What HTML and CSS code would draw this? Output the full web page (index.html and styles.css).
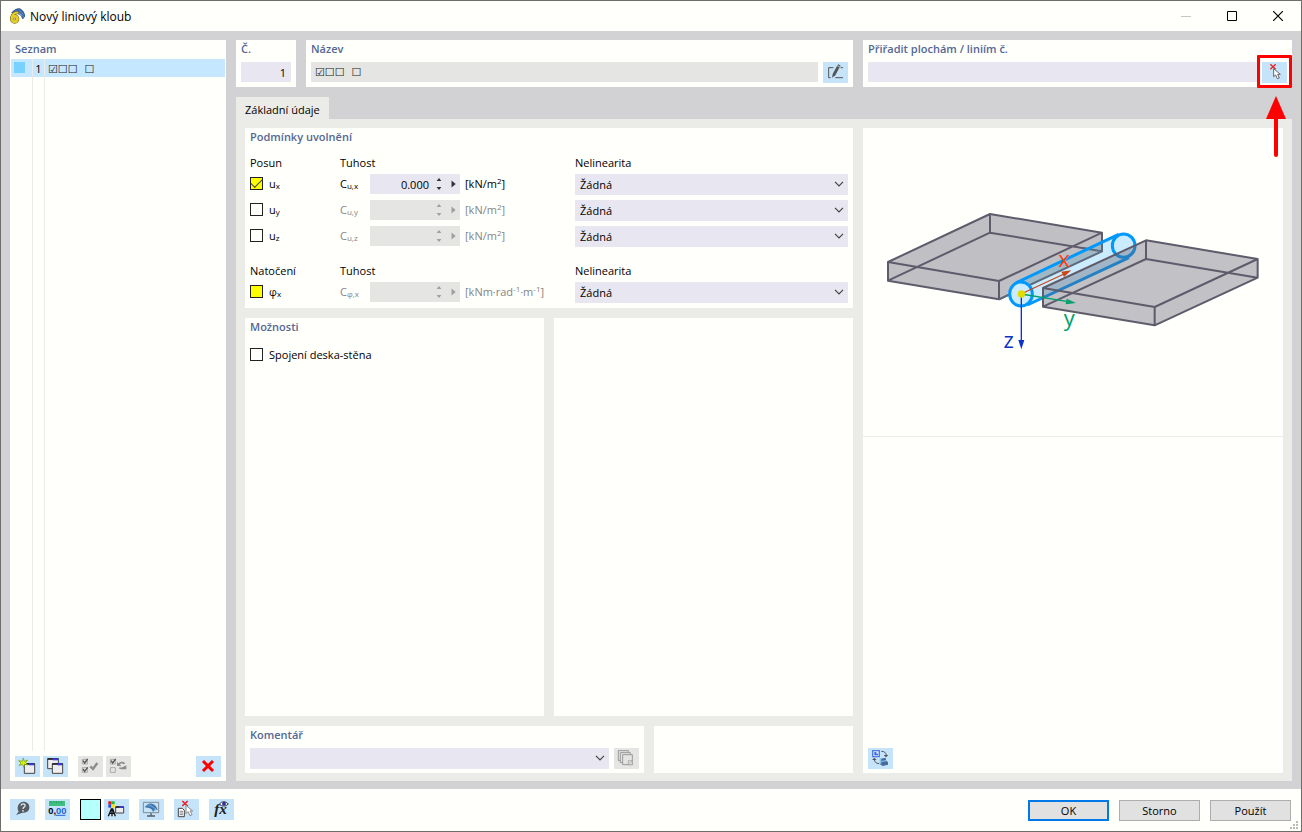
FILE: index.html
```html
<!DOCTYPE html>
<html lang="cs">
<head>
<meta charset="utf-8">
<title>Nový liniový kloub</title>
<link rel="stylesheet" href="styles.css">
</head>
<body>
<svg class="defs" aria-hidden="true">
  <symbol id="chevron" viewBox="0 0 10 6"><path d="M1 .8L5 4.8L9 .8" fill="none" stroke="#444" stroke-width="1.2"/></symbol>
  <symbol id="updown" viewBox="0 0 6 12"><path d="M3 0L5.4 3H.6zM3 12L5.4 9H.6z" fill="currentColor"/></symbol>
  <symbol id="play" viewBox="0 0 5 8"><path d="M.5 .5L4.7 4L.5 7.500z" fill="currentColor"/></symbol>
</svg>
<div class="window">
  <header class="titlebar">
    <svg class="app-icon" viewBox="0 0 48 48">
      <path d="M8 14Q20 0 33 2Q45 8 48 24L41 33Q39 20 25 16z" fill="#3566a8" stroke="#1f4475" stroke-width="2"/>
      <path d="M20 7L40 24M29 4L44 20M16 12Q30 8 44 27" stroke="#8fb6e0" stroke-width="1.500" fill="none"/>
      <path d="M25 14Q12 13 8 28" fill="none" stroke="#6d5d14" stroke-width="9" stroke-linecap="round"/>
      <circle cx="17" cy="33" r="8" fill="none" stroke="#6d5d14" stroke-width="12"/>
      <circle cx="17" cy="33" r="8" fill="none" stroke="#e3cb28" stroke-width="9"/>
      <path d="M25 14Q12 13 8 28" fill="none" stroke="#e3cb28" stroke-width="6" stroke-linecap="round"/>
    </svg>
    <h1>Nový liniový kloub</h1>
    <div class="window-controls">
      <button aria-label="Minimalizovat" disabled><svg viewBox="0 0 10 10"><path d="M0 5.500H10" stroke="#c4c8c2"/></svg></button>
      <button aria-label="Maximalizovat"><svg viewBox="0 0 10 10"><path d="M.5 .5H9.500V9.500H.5z" fill="none" stroke="#000"/></svg></button>
      <button aria-label="Zavřít"><svg viewBox="0 0 10 10"><path d="M0 0L10 10M10 0L0 10" stroke="#000" stroke-width="1.200"/></svg></button>
    </div>
  </header>

  <div class="workspace">
    <aside class="panel list-panel">
      <h2>Seznam</h2>
      <div class="list">
        <div class="selected"><span class="color-chip"></span></div>
        <div class="selected number">1</div>
        <div class="selected symbols">☑☐☐&nbsp; ☐</div>
        <div></div><div></div><div class="last"></div>
      </div>
      <div class="list-tools">
        <button class="tool" aria-label="Nový"><svg viewBox="0 0 75 63">
          <path d="M28 23H59V52H28z" fill="#eee" stroke="#444" stroke-width="3"/><path d="M28 24H59" stroke="#222" stroke-width="5"/><path d="M43 25H57" stroke="#3c3cf0" stroke-width="6"/>
          <path d="M25 6L28 16L38 12L32 20L39 27L29 25L26 34L22 25L12 29L18 21L11 14L22 16z" fill="#dff000" stroke="#6a9a10" stroke-width="2"/></svg></button>
        <button class="tool" aria-label="Kopírovat"><svg viewBox="0 0 75 63">
          <path d="M14 8H46V38H14z" fill="#eee" stroke="#444" stroke-width="3"/><path d="M14 9H46" stroke="#222" stroke-width="5"/><path d="M29 10H44" stroke="#3c3cf0" stroke-width="6"/>
          <path d="M28 23H59V52H28z" fill="#eee" stroke="#444" stroke-width="3"/><path d="M28 24H59" stroke="#222" stroke-width="5"/><path d="M43 25H57" stroke="#3c3cf0" stroke-width="6"/></svg></button>
        <button class="tool off group" aria-label="Vybrat vše" disabled><svg viewBox="0 0 75 63">
          <path d="M13 10H28V24H13zM13 35H28V49H13z" fill="none" stroke="#aaa" stroke-width="3"/><path d="M15 14L20 21L29 9M15 39L20 46L29 34" fill="none" stroke="#555" stroke-width="4"/><path d="M37 31L45 39L58 21" fill="none" stroke="#8c8c8c" stroke-width="7"/></svg></button>
        <button class="tool off" aria-label="Obrátit výběr" disabled><svg viewBox="0 0 75 63">
          <path d="M13 10H28V24H13zM13 35H28V49H13z" fill="none" stroke="#aaa" stroke-width="3"/><path d="M15 14L20 21L29 9" fill="none" stroke="#555" stroke-width="4"/><path d="M38 25Q46 16 56 23M57 32Q49 40 40 35" fill="none" stroke="#8c8c8c" stroke-width="5"/><path d="M33 17V30H46zM61 27V40H48z" fill="#8c8c8c"/></svg></button>
        <button class="tool delete" aria-label="Smazat"><svg viewBox="0 0 75 63"><path d="M21 15L51 45M51 15L21 45" stroke="#f00" stroke-width="9"/></svg></button>
      </div>
    </aside>

    <main class="main">
      <div class="heading-row">
        <section class="panel"><h2><label for="no">Č.</label></h2><input id="no" class="field number-field" value="1"></section>
        <section class="panel">
          <h2><label for="name">Název</label></h2>
          <div class="field-row">
            <input id="name" class="field symbols readonly" value="☑☐☐&nbsp; ☐" readonly>
            <button class="tool" aria-label="Upravit název"><svg viewBox="0 0 75 63"><path d="M31 17H17V47H23M37 47H60M53 17H60" fill="none" stroke="#555" stroke-width="3"/><path d="M27 47L29 36L42 12L50 16L37 40z" fill="#555"/><path d="M43 10L46 7L53 11L51 14z" fill="#555"/></svg></button>
          </div>
        </section>
        <section class="panel">
          <h2><label for="assign">Přiřadit plochám / liniím č.</label></h2>
          <div class="field-row">
            <input id="assign" class="field">
            <div class="callout">
              <button class="tool" aria-label="Vybrat v grafice"><svg viewBox="0 0 75 63"><path d="M25 7L41 22M41 7L25 22" stroke="#e22" stroke-width="4"/><path d="M35 20V44L41 39L46 50L52 48L47 37H55z" fill="#fff" stroke="#666" stroke-width="3"/></svg></button>
              <span class="callout-frame"></span>
              <svg class="callout-arrow" viewBox="0 0 20 62"><path d="M10 0L20 23H0z" fill="#f00"/><path d="M10 20V59" stroke="#f00" stroke-width="4" stroke-linecap="round"/></svg>
            </div>
          </div>
        </section>
      </div>

      <nav class="tabs"><button class="tab">Základní údaje</button></nav>

      <div class="sheet">
        <div class="left-column">
          <section class="panel">
            <h2>Podmínky uvolnění</h2>
            <div class="conditions">
              <span class="head">Posun</span><span class="head wide">Tuhost</span><span class="head">Nelinearita</span>

              <label class="check"><input type="checkbox" class="yellow" checked><span>u<sub>x</sub></span></label>
              <label for="cux">C<sub>u,x</sub></label>
              <div class="spin"><input id="cux" value="0.000"><button aria-label="Změnit hodnotu"><svg class="updown"><use href="#updown"/></svg></button><button aria-label="Nabídka"><svg class="play"><use href="#play"/></svg></button></div>
              <span class="unit">[kN/m<sup>2</sup>]</span>
              <div class="select"><select aria-label="Nelinearita ux"><option>Žádná</option></select><svg><use href="#chevron"/></svg></div>

              <label class="check"><input type="checkbox"><span>u<sub>y</sub></span></label>
              <label class="dim" for="cuy">C<sub>u,y</sub></label>
              <div class="spin dim"><input id="cuy" disabled><button aria-label="Změnit hodnotu" disabled><svg class="updown"><use href="#updown"/></svg></button><button aria-label="Nabídka" disabled><svg class="play"><use href="#play"/></svg></button></div>
              <span class="unit dim">[kN/m<sup>2</sup>]</span>
              <div class="select"><select aria-label="Nelinearita uy"><option>Žádná</option></select><svg><use href="#chevron"/></svg></div>

              <label class="check"><input type="checkbox"><span>u<sub>z</sub></span></label>
              <label class="dim" for="cuz">C<sub>u,z</sub></label>
              <div class="spin dim"><input id="cuz" disabled><button aria-label="Změnit hodnotu" disabled><svg class="updown"><use href="#updown"/></svg></button><button aria-label="Nabídka" disabled><svg class="play"><use href="#play"/></svg></button></div>
              <span class="unit dim">[kN/m<sup>2</sup>]</span>
              <div class="select"><select aria-label="Nelinearita uz"><option>Žádná</option></select><svg><use href="#chevron"/></svg></div>
            </div>
            <div class="conditions rotation">
              <span class="head">Natočení</span><span class="head wide">Tuhost</span><span class="head">Nelinearita</span>

              <label class="check"><input type="checkbox" class="yellow"><span>φ<sub>x</sub></span></label>
              <label class="dim" for="cphi">C<sub>φ,x</sub></label>
              <div class="spin dim"><input id="cphi" disabled><button aria-label="Změnit hodnotu" disabled><svg class="updown"><use href="#updown"/></svg></button><button aria-label="Nabídka" disabled><svg class="play"><use href="#play"/></svg></button></div>
              <span class="unit dim">[kNm·rad<sup>-1</sup>·m<sup>-1</sup>]</span>
              <div class="select"><select aria-label="Nelinearita φx"><option>Žádná</option></select><svg><use href="#chevron"/></svg></div>
            </div>
          </section>

          <div class="options-row">
            <section class="panel">
              <h2>Možnosti</h2>
              <label class="check option"><input type="checkbox"><span>Spojení deska-stěna</span></label>
            </section>
            <section class="panel"></section>
          </div>

          <div class="comment-row">
            <section class="panel">
              <h2><label for="comment">Komentář</label></h2>
              <div class="field-row">
                <div class="select"><select id="comment"><option></option></select><svg><use href="#chevron"/></svg></div>
                <button class="tool off" aria-label="Převzít komentář" disabled><svg viewBox="0 0 75 63"><g fill="#e4e4e2" stroke="#999" stroke-width="3"><path d="M13 8H43V38H13z"/><path d="M19 14H49V44H19z"/><path d="M26 20H55V50H26z"/><path d="M43 38H55V50H43zM46 47L54 39" stroke-width="2"/></g></svg></button>
              </div>
            </section>
            <section class="panel"></section>
          </div>
        </div>

        <section class="panel preview">
          <div class="drawing">
            <svg viewBox="-21 -216 1260 924" role="img" aria-label="Schéma liniového kloubu">
              <g stroke="#5e5b6b" stroke-width="6" stroke-linejoin="round">
                <path d="M54 186L360 42L696 98V154L387 298L54 242z" fill="#bfbfc4"/>
                <path d="M54 186L387 243L696 98M387 243V298M360 42V98M54 242L360 98L696 154" fill="none"/>
              </g>
              <path d="M439 248L746 103A36 36 0 0 1 777 173L472 315z" fill="#cbecff"/>
              <path d="M439 248L696 127V154L480 255z" fill="#9fb8c6"/>
              <path d="M387 298L696 154V126M640 145L696 154" fill="none" stroke="#5b6a7d" stroke-width="6"/>
              <g fill="none" stroke="#0098fa" stroke-width="9">
                <path d="M439 248L746 103M472 315L777 173"/>
                <ellipse cx="761" cy="137" rx="34" ry="35"/>
                <ellipse cx="453" cy="282" rx="34" ry="36" fill="#cbecff"/>
              </g>
              <path d="M519 264L828 121L1163 177V233L854 376L519 320z" fill="#5e5b6b" fill-opacity=".38"/>
              <path d="M519 264L828 121L1163 177V233L854 376L519 320zM519 264L854 321L1163 177M854 321V376M828 121V177M519 320L828 177L1163 233" fill="none" stroke="#5e5b6b" stroke-width="6" stroke-linejoin="round"/>
              <path d="M453 282L582 222" stroke="#cb4519" stroke-width="4"/><path d="M604 211L574 215L582 231z" fill="#cb4519"/>
              <path d="M453 282L590 304" stroke="#00a06c" stroke-width="4"/><path d="M618 309L587 313L590 296z" fill="#00a06c"/>
              <path d="M454 282V422" stroke="#0c33c8" stroke-width="4"/><path d="M454 448L445 420H463z" fill="#0c33c8"/>
              <circle cx="454" cy="282" r="11" fill="#dfdc00"/>
              <text x="582" y="202" fill="#ff3c0c">x</text><text x="598" y="378" fill="#00a06c">y</text><text x="416" y="445" fill="#0c33c8">z</text>
            </svg>
          </div>
          <button class="tool" aria-label="Přepnout zobrazení"><svg viewBox="0 0 75 63">
            <path d="M14 8H34V26H14z" fill="#dce9ff" stroke="#4f7be6" stroke-width="4"/><path d="M19 12H25V17H30V22H19z" fill="#4169d8"/>
            <path d="M40 10Q54 10 55 23M19 34Q20 46 33 47" fill="none" stroke="#555" stroke-width="3"/><path d="M47 21H61L54 28zM12 36H26L19 29z" fill="#555"/>
            <path d="M38 32L53 29L54 37L60 43V50L44 54L35 48z" fill="#446a9c"/><path d="M35 31H40V49L35 46z" fill="#8cc4f0"/><path d="M41 40L57 38" stroke="#a5cdec" stroke-width="3"/></svg></button>
        </section>
      </div>
    </main>
  </div>

  <footer class="footer">
    <button class="tool" aria-label="Nápověda"><svg viewBox="0 0 75 63"><path d="M40 8C52 8 58 16 58 25C58 36 49 43 38 41L18 48L26 38C18 24 27 8 40 8z" fill="#555b60"/><path d="M33 20Q34 14 41 15Q48 17 44 23Q39 26 39 30M39 33V38" fill="none" stroke="#d6e9f7" stroke-width="4"/></svg></button>
    <button class="tool" aria-label="Jednotky a desetinná místa"><svg viewBox="0 0 75 63"><path d="M12 6H60V21H12z" fill="#3fc080"/><path d="M18 6V13M26 6V11M34 6V13M42 6V11M50 6V13" stroke="#1c8b52" stroke-width="2"/><text x="10" y="45" class="digits">0,<tspan fill="#2465d8">00</tspan></text><path d="M32 49H61" stroke="#2465d8" stroke-width="3"/></svg></button>
    <button class="swatch" aria-label="Barva"></button>
    <button class="tool near" aria-label="Zobrazení"><svg viewBox="0 0 75 63">
      <path d="M13 7H22V16H13z" fill="#e11"/><path d="M22 7H32V16H22z" fill="#14b83c"/><path d="M13 16H22V26H13z" fill="#2947e8"/><path d="M22 16H32V26H22z" fill="#ffe200"/>
      <path d="M13 52L22 30H26L34 52M17 43H31M24 31V52" fill="none" stroke="#111" stroke-width="4"/><path d="M35 24H59V42H35z" fill="#eee" stroke="#444" stroke-width="3"/><path d="M35 24H59" stroke="#222" stroke-width="5"/><path d="M46 24H57" stroke="#3c3cf0" stroke-width="5"/></svg></button>
    <button class="tool" aria-label="Monitor"><svg viewBox="0 0 75 63"><path d="M13 10H59V41H13z" fill="none" stroke="#7f8c96" stroke-width="3"/><path d="M36 42V50M24 51H48" stroke="#555e66" stroke-width="4"/><path d="M17 25Q27 11 39 14Q54 19 56 34L49 31L42 39Q40 26 17 25z" fill="#3a72ad"/><path d="M30 16L53 31M24 20Q43 18 49 36" fill="none" stroke="#85b3dc" stroke-width="2"/></svg></button>
    <button class="tool" aria-label="Výběr objektů"><svg viewBox="0 0 75 63"><path d="M13 28H25L31 34V53H13z" fill="#fff" stroke="#444" stroke-width="3"/><path d="M17 37H27M17 42H27M17 47H27" stroke="#444" stroke-width="2"/><path d="M25 6L41 21M41 6L25 21" stroke="#e22" stroke-width="5"/><path d="M36 19V44L42 38L48 50L54 47L48 36H56z" fill="#fff" stroke="#888" stroke-width="3"/></svg></button>
    <button class="tool" aria-label="Funkce"><svg viewBox="0 0 75 63"><text x="16" y="45" class="function">f</text><text x="31" y="45" class="function">x</text><path d="M31 15Q44 1 58 15Q44 28 31 15z" fill="#fff" stroke="#333b60" stroke-width="3"/><circle cx="45" cy="14" r="6" fill="#35358c"/></svg></button>
    <div class="actions">
      <button class="action primary">OK</button>
      <button class="action">Storno</button>
      <button class="action">Použít</button>
    </div>
    <svg class="grip" viewBox="0 0 8 8"><path d="M6 0h2v2h-2zM3 3h2v2h-2zM6 3h2v2h-2zM0 6h2v2h-2zM3 6h2v2h-2zM6 6h2v2h-2z" fill="#bbb"/></svg>
  </footer>
</div>
</body>
</html>
```
FILE: styles.css
```css
* { box-sizing: border-box; }

:root {
  --paper: #fffffc;
  --field: #e8e6f1;
  --tool: #c5e3f9;
  --off: #e5e5e3;
  --sheet: #ebece8;
}

body {
  margin: 0;
  font-family: "Open Sans", "Noto Sans", sans-serif;
  font-size: 11px;
  color: #000;
}

button, input, select { font: inherit; color: inherit; margin: 0; border: 0; border-radius: 0; padding: 0; }
svg { display: block; }
.defs { position: absolute; width: 0; height: 0; }

.window {
  display: flex;
  flex-direction: column;
  min-height: 100vh;
  border: 1px solid #6d6d6d;
  background: var(--paper);
}

.titlebar { display: flex; align-items: center; height: 30px; padding-left: 8px; }
.app-icon { width: 16px; height: 16px; }
.titlebar h1 { flex: 1; margin: 0 0 0 5px; font-size: 12px; font-weight: 400; }
.window-controls { display: flex; height: 28px; }
.window-controls button { display: grid; place-items: center; width: 46px; background: none; }
.window-controls svg { width: 10px; height: 10px; }

.workspace { flex: 1; display: flex; gap: 10px; padding: 9px 9px 8px; background: #d2d2d4; }

.panel { min-width: 0; padding: 0 5px 4px; background: var(--paper); }
.panel h2 { margin: 0 0 4px; font-size: 11px; line-height: 18px; font-weight: 600; color: #536894; white-space: nowrap; }

.list-panel { display: flex; flex-direction: column; flex: 0 0 216px; padding: 0 1px 4px; }
.list-panel h2 { margin: 0 4px 1px; }
.list { flex: 1; display: grid; grid-template-columns: 22px 12px 1fr; grid-template-rows: 18px 1fr; }
.list > div { border-right: 1px solid #ebece8; }
.list > .symbols, .list > .last { border-right: 0; }
.selected { background: #c5e7ff; line-height: 20px; }
.selected.number { text-align: center; }
.list .symbols { padding-left: 3px; line-height: 22px; }
.color-chip { display: block; width: 11px; height: 11px; margin: 3px; background: #77d2ff; }
.symbols { font-family: "DejaVu Sans", sans-serif; color: #222; }
.list-tools { display: flex; gap: 3px; padding: 5px 4px 0; }
.list-tools .group { margin-left: 7px; }
.list-tools .delete { margin-left: auto; }

.tool { flex: none; width: 25px; height: 21px; background: var(--tool); }
.tool svg { width: 25px; height: 21px; }
.tool.off { background: var(--off); }

.main { flex: 1; min-width: 0; display: flex; flex-direction: column; }
.heading-row { display: grid; grid-template-columns: 60px minmax(0, 1fr) 429px; gap: 10px; }
.field { display: block; width: 100%; min-width: 0; height: 20px; padding: 0 5px; background: var(--field); }
.number-field { text-align: right; }
.field.readonly { padding: 1px 4px 0; background: var(--off); }
.field-row { display: flex; gap: 5px; }
.field-row .select { flex: 1; }

.callout { position: relative; height: 21px; }
.callout-frame { position: absolute; inset: -7px -5px -5px; border: 3px solid #f00; border-radius: 1px; pointer-events: none; }
.callout-arrow { position: absolute; left: 4px; top: 34px; width: 20px; height: 62px; }

.tabs { display: flex; margin-top: 10px; }
.tab { height: 22px; padding: 3px 9px 0; background: var(--sheet); }

.sheet { flex: 1; display: grid; grid-template-columns: minmax(0, 1fr) 420px; gap: 10px; padding: 9px 9px 8px; background: var(--sheet); }
.left-column { display: flex; flex-direction: column; gap: 10px; min-width: 0; }

.conditions { display: grid; grid-template-columns: 90px 30px 90px 115px minmax(0, 1fr); row-gap: 5px; align-items: center; padding-top: 2px; }
.conditions.rotation { padding: 13px 0 1px; }
.conditions > label, .unit { line-height: 19px; align-self: start; }
.head { height: 22px; line-height: 22px; margin-bottom: -5px; }
.head.wide { grid-column: span 3; }
.dim { color: #858585; }
.unit { padding-left: 5px; white-space: nowrap; }
sub, sup { font-size: 8px; line-height: 0; }
sub { vertical-align: -1px; }
sup { vertical-align: 4px; }

.check { display: flex; align-items: center; gap: 6px; }
.check input { appearance: none; display: grid; place-items: center; width: 13px; height: 13px; border: 1px solid #222; background: var(--paper); }
.check .yellow { background: #ff0; }
.check input:checked::after { content: ""; width: 10px; height: 5px; margin-top: -3px; border: solid #444; border-width: 0 0 1px 1px; transform: rotate(-45deg); }
.check.option { margin-top: 8px; height: 20px; }

.spin { display: flex; align-items: center; height: 20px; background: var(--field); align-self: start; }
.spin input { flex: 1; min-width: 0; height: 20px; padding: 0 1px 0 4px; text-align: right; background: none; }
.spin.dim { background: var(--off); }
.spin button { display: grid; place-items: center; width: 13px; height: 20px; background: none; color: #333; }
.spin button:first-of-type { width: 17px; }
.spin.dim button { color: #a0a0a0; }
.spin .updown { width: 6px; height: 12px; }
.spin .play { width: 5px; height: 8px; }

.select { position: relative; height: 21px; min-width: 0; }
.select select { appearance: none; display: block; width: 100%; height: 21px; padding: 0 20px 1px 5px; background: var(--field); }
.select svg { position: absolute; right: 4px; top: 7px; width: 10px; height: 6px; pointer-events: none; }

.options-row { flex: 1; display: grid; grid-template-columns: 1fr 1fr; gap: 10px; min-height: 100px; }
.comment-row { display: grid; grid-template-columns: 2fr 1fr; gap: 10px; }

.preview { display: flex; flex-direction: column; justify-content: space-between; padding: 0 0 4px; }
.preview .tool { margin-left: 5px; }
.drawing { border-bottom: 1px solid var(--sheet); }
.drawing svg { width: 100%; }
.drawing text { font-size: 66px; text-anchor: middle; }

.footer { position: relative; display: flex; gap: 10px; padding: 10px 10px 11px 9px; }
.swatch { width: 21px; height: 21px; border: 1px solid #000; background: #b5fffd; }
.near { margin-left: -7px; }
.digits { font: 700 28px "Liberation Sans", sans-serif; }
.function { font: italic 700 46px "Liberation Serif", serif; fill: #222; }
.actions { display: flex; gap: 10px; margin: 1px 0 -1px auto; }
.action { width: 81px; height: 21px; border: 1px solid #adadad; background: #e1e1e1; }
.action.primary { border: 2px solid #0078e8; }
.grip { position: absolute; right: 3px; bottom: 2px; width: 8px; height: 8px; }
```
